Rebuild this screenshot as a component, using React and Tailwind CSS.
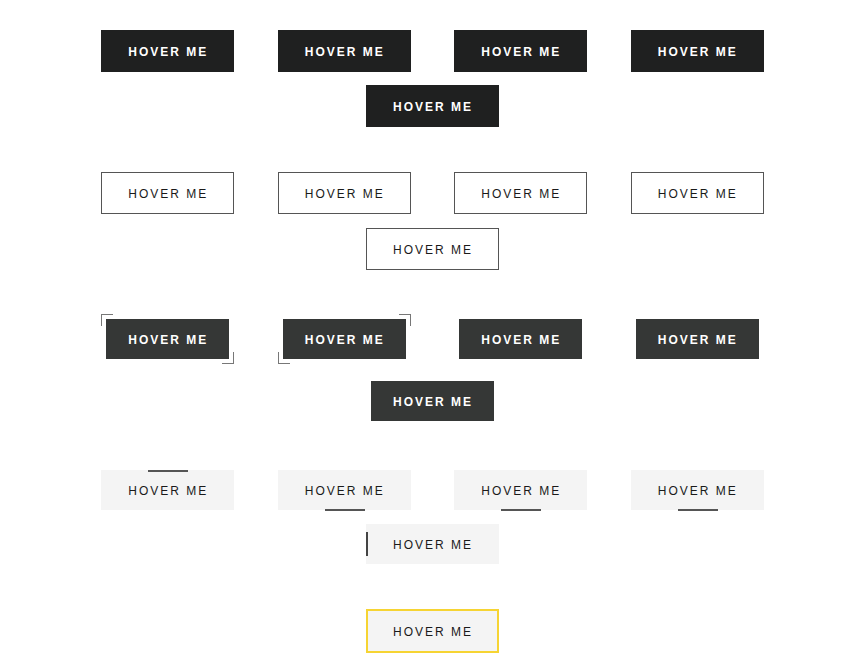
import React from 'react';

const LABEL = 'HOVER ME';

const text = "font-['Liberation_Sans',Arial,sans-serif] text-[12px] tracking-[2px] uppercase pl-px pt-px";

function Row({ gap, className = '', children }) {
  return (
    <div className={`flex flex-wrap justify-center gap-x-[43.5px] ${gap} w-[700px] mx-auto ${className}`}>
      {children}
    </div>
  );
}

function SolidButton() {
  return (
    <button className={`w-[133px] h-[42px] bg-[#1f2020] text-white font-bold ${text}`}>
      {LABEL}
    </button>
  );
}

function OutlineButton() {
  return (
    <button className={`w-[133px] h-[42px] bg-white border border-[#555] text-[#1a1a1a] ${text}`}>
      {LABEL}
    </button>
  );
}

function CornerButton({ corners = [] }) {
  return (
    <div className="relative w-[133px] h-[50px] p-[5px]">
      {corners.includes('tl') && (
        <>
          <span className="absolute left-0 top-0 w-[12px] h-px bg-[#777]" />
          <span className="absolute left-0 top-0 w-px h-[12px] bg-[#777]" />
        </>
      )}
      {corners.includes('tr') && (
        <>
          <span className="absolute right-0 top-0 w-[12px] h-px bg-[#777]" />
          <span className="absolute right-0 top-0 w-px h-[12px] bg-[#777]" />
        </>
      )}
      {corners.includes('bl') && (
        <>
          <span className="absolute left-0 bottom-0 w-[12px] h-px bg-[#777]" />
          <span className="absolute left-0 bottom-0 w-px h-[12px] bg-[#777]" />
        </>
      )}
      {corners.includes('br') && (
        <>
          <span className="absolute right-0 bottom-0 w-[12px] h-px bg-[#777]" />
          <span className="absolute right-0 bottom-0 w-px h-[12px] bg-[#777]" />
        </>
      )}
      <button className={`w-full h-full bg-[#353736] text-white font-bold ${text}`}>
        {LABEL}
      </button>
    </div>
  );
}

function LineButton({ line }) {
  return (
    <button className={`relative w-[133px] h-[40px] bg-[#f4f4f4] text-[#1a1a1a] ${text}`}>
      {line === 'top' && <span className="absolute top-0 left-[47px] w-[40px] h-[2px] bg-[#555]" />}
      {line === 'bottom' && <span className="absolute bottom-[-1px] left-[47px] w-[40px] h-[2px] bg-[#555]" />}
      {line === 'left' && <span className="absolute left-0 top-[8px] w-[2px] h-[24px] bg-[#444]" />}
      {LABEL}
    </button>
  );
}

export default function App() {
  return (
    <div className="w-[865px] h-[655px] bg-white pt-[30px] flex flex-col overflow-hidden">
      <Row gap="gap-y-[13px]">
        <SolidButton />
        <SolidButton />
        <SolidButton />
        <SolidButton />
        <SolidButton />
      </Row>

      <Row gap="gap-y-[14px]" className="mt-[45px]">
        <OutlineButton />
        <OutlineButton />
        <OutlineButton />
        <OutlineButton />
        <OutlineButton />
      </Row>

      <Row gap="gap-y-[12px]" className="mt-[44px]">
        <CornerButton corners={['tl', 'br']} />
        <CornerButton corners={['tr', 'bl']} />
        <CornerButton />
        <CornerButton />
        <CornerButton />
      </Row>

      <Row gap="gap-y-[14px]" className="mt-[44px]">
        <LineButton line="top" />
        <LineButton line="bottom" />
        <LineButton line="bottom" />
        <LineButton line="bottom" />
        <LineButton line="left" />
      </Row>

      <Row gap="gap-y-[14px]" className="mt-[45px]">
        <button className={`w-[133px] h-[44px] bg-[#f4f4f4] border-2 border-[#f6d433] text-[#1a1a1a] ${text}`}>
          {LABEL}
        </button>
      </Row>
    </div>
  );
}
